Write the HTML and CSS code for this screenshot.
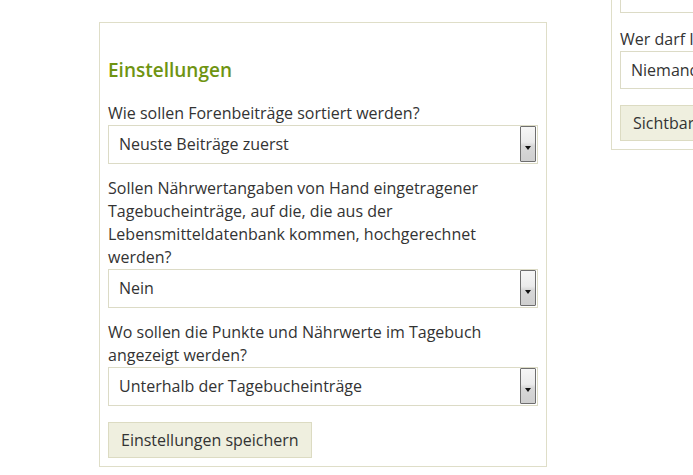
FILE: index.html
```html
<!DOCTYPE html>
<html lang="de">
<head>
<meta charset="utf-8">
<title>Einstellungen</title>
<link rel="stylesheet" href="styles.css">
</head>
<body>
<div class="page">
  <section class="panel panel-main">
    <h2 class="title">Einstellungen</h2>
    <div class="field">
      <label class="label">Wie sollen Forenbeiträge sortiert werden?</label>
      <div class="select"><span class="select-value">Neuste Beiträge zuerst</span><span class="select-btn"></span></div>
    </div>
    <div class="field">
      <label class="label">Sollen Nährwertangaben von Hand eingetragener Tagebucheinträge, auf die, die aus der Lebensmitteldatenbank kommen, hochgerechnet werden?</label>
      <div class="select"><span class="select-value">Nein</span><span class="select-btn"></span></div>
    </div>
    <div class="field">
      <label class="label">Wo sollen die Punkte und Nährwerte im Tagebuch angezeigt werden?</label>
      <div class="select"><span class="select-value">Unterhalb der Tagebucheinträge</span><span class="select-btn"></span></div>
    </div>
    <button class="btn">Einstellungen speichern</button>
  </section>
  <section class="panel panel-side">
    <div class="input"></div>
    <div class="field">
      <label class="label nowrap">Wer darf Ihr Profil sehen?</label>
      <div class="select plain"><span class="select-value">Niemand</span></div>
    </div>
    <button class="btn nowrap">Sichtbarkeit speichern</button>
  </section>
</div>
</body>
</html>
```
FILE: styles.css
```css
html, body {
  margin: 0;
  padding: 0;
  background: #fff;
  overflow: hidden;
}
body {
  font-family: "Open Sans", "DejaVu Sans", sans-serif;
  font-size: 16px;
  line-height: 23px;
  color: #333;
  width: 693px;
  height: 475px;
}
.page {
  display: flex;
  align-items: flex-start;
  gap: 64px;
  padding-left: 99px;
}
.panel {
  border: 1px solid #dfdec8;
  padding: 9px 8px 8px 8px;
  box-sizing: border-box;
  flex: none;
}
.panel-main {
  width: 448px;
  margin-top: 22px;
}
.panel-side {
  width: 300px;
  margin-top: -35px;
}
.title {
  margin: 25px 0 19px 0;
  font-size: 19px;
  line-height: 26px;
  font-weight: 600;
  color: #6f9412;
}
.field {
  display: flex;
  flex-direction: column;
  margin-bottom: 13px;
}
.label {
  display: block;
}
.nowrap {
  white-space: nowrap;
}
.select {
  position: relative;
  height: 39px;
  border: 1px solid #dcdbc6;
  box-sizing: border-box;
  display: flex;
  align-items: center;
  padding-left: 10px;
}
.select.plain {
  height: 38px;
}
.select-value {
  flex: 1;
}
.select-btn {
  position: absolute;
  top: 0;
  bottom: 1px;
  right: 1px;
  width: 16px;
  box-sizing: border-box;
  border: 1px solid #6e6e6e;
  border-radius: 1px;
  background: linear-gradient(#f6f6f6 0%, #ebebeb 45%, #d8d8d8 55%, #cfcfcf 100%);
}
.select-btn::after {
  content: "";
  position: absolute;
  left: 4px;
  top: 19px;
  border-left: 3.5px solid transparent;
  border-right: 3.5px solid transparent;
  border-top: 4px solid #111;
}
.btn {
  display: block;
  font-family: inherit;
  font-size: 16px;
  line-height: 23px;
  color: #333;
  background: #efefdf;
  border: 1px solid #dcdbc2;
  padding: 6px 12px 5px 12px;
  margin: 16px 0 0 0;
  cursor: pointer;
}
.input {
  height: 38px;
  border: 1px solid #dcdbc6;
  box-sizing: border-box;
  margin-bottom: 15px;
}
.panel-side .field {
  margin-bottom: 0;
}
```
